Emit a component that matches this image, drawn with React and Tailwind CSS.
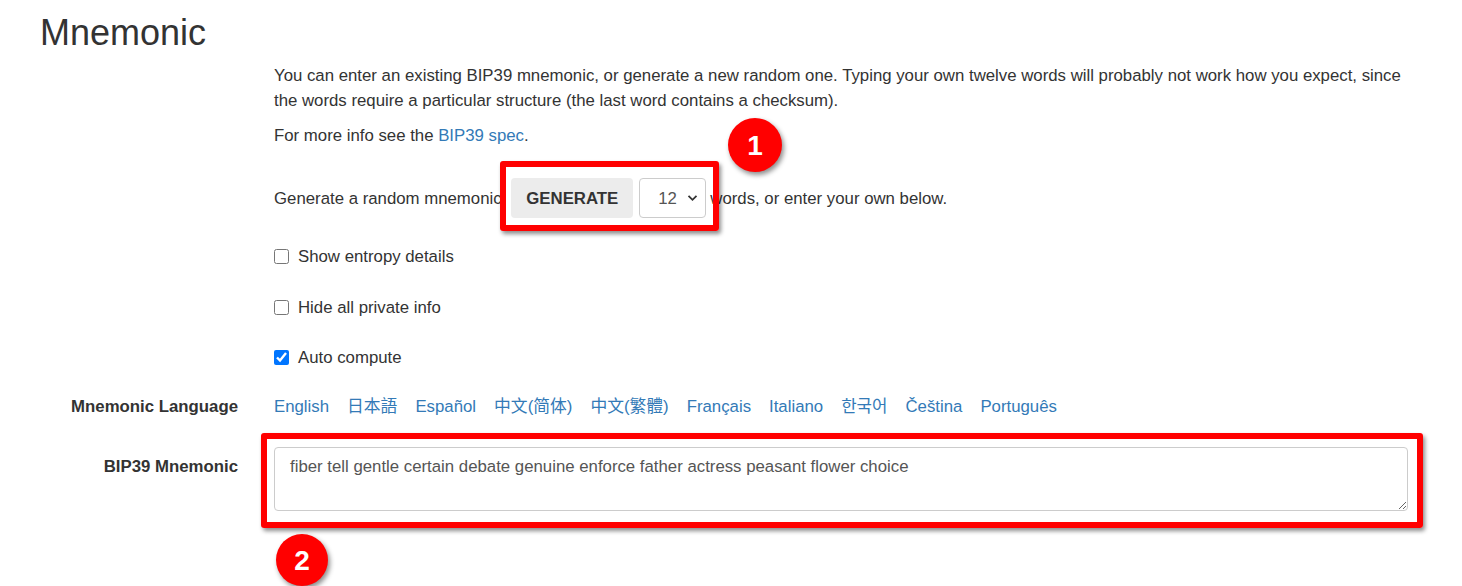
import React from "react";

const langs = [
  "English",
  "日本語",
  "Español",
  "中文(简体)",
  "中文(繁體)",
  "Français",
  "Italiano",
  "한국어",
  "Čeština",
  "Português",
];

function Check({ label, checked }) {
  return (
    <label className="flex items-center h-[25px]">
      <input
        type="checkbox"
        defaultChecked={checked}
        className="w-[15px] h-[15px] m-0 mr-[9px] accent-[#0075ff]"
      />
      <span>{label}</span>
    </label>
  );
}

export default function App() {
  return (
    <div
      className="relative w-full h-[586px] overflow-hidden bg-white text-[#333] text-[16.8px] leading-[25px]"
      style={{ fontFamily: '"Liberation Sans", Arial, "Noto Sans CJK SC", "Noto Sans CJK KR", sans-serif' }}
    >
      <div className="pl-[40px]">
        <h2 className="text-[36px] leading-[40px] font-normal mt-[13px] m-0">Mnemonic</h2>

        <div className="flex">
          <div className="w-[198px] shrink-0" />
          <div className="ml-[36px] w-[1134px] flex flex-col">
            <p className="m-0 mt-[9.5px]">
              You can enter an existing BIP39 mnemonic, or generate a new random one. Typing your own twelve words will probably not work how you expect, since the words require a particular structure (the last word contains a checksum).
            </p>
            <p className="m-0 mt-[10px]">
              For more info see the <a className="text-[#337ab7]" href="#">BIP39 spec</a>.
            </p>

            <div className="flex items-center mt-[30.5px] h-[40px]">
              <span>Generate a random mnemonic:</span>
              <div className="relative flex items-center ml-[5px]">
                <button className="h-[40px] w-[122px] bg-[#ececec] rounded-[4px] font-bold text-[#333] text-[16.8px]">
                  GENERATE
                </button>
                <div className="relative ml-[6px] h-[40px] w-[67px] border border-[#ccc] rounded-[4px] bg-white flex items-center">
                  <span className="pl-[18px] text-[#555]">12</span>
                  <svg className="absolute right-[7px] top-[15px]" width="11" height="8" viewBox="0 0 11 8">
                    <path d="M1.5 1.8 L5.5 5.8 L9.5 1.8" fill="none" stroke="#333" strokeWidth="1.8" />
                  </svg>
                </div>
                <div className="absolute left-[-11px] top-[-17px] right-[-13px] bottom-[-13px] border-[6px] border-[#ff0000] rounded-[3px] shadow-[2px_3px_4px_rgba(0,0,0,0.45)] pointer-events-none" />
              </div>
              <span className="ml-[4px]">words, or enter your own below.</span>
            </div>

            <div className="mt-[25.5px]">
              <Check label="Show entropy details" />
            </div>
            <div className="mt-[26px]">
              <Check label="Hide all private info" />
            </div>
            <div className="mt-[25px]">
              <Check label="Auto compute" checked />
            </div>
          </div>
        </div>

        <div className="flex mt-[24px] h-[25px] items-center">
          <div className="w-[198px] shrink-0 text-right font-bold">Mnemonic Language</div>
          <div className="ml-[36px] flex items-center gap-[18px] text-[#337ab7]">
            {langs.map((l) => (
              <a key={l} href="#" className="text-[#337ab7]">
                {l}
              </a>
            ))}
          </div>
        </div>

        <div className="flex mt-[28.5px]">
          <div className="w-[198px] shrink-0 text-right font-bold pt-[6.5px]">BIP39 Mnemonic</div>
          <div className="ml-[36px] w-[1134px] relative">
            <textarea
              className="block w-full h-[64px] border border-[#ccc] rounded-[4px] px-[15px] py-[6px] text-[#555] text-[16.8px] leading-[25px] outline-none"
              style={{ fontFamily: '"Liberation Sans", Arial, sans-serif' }}
              defaultValue="fiber tell gentle certain debate genuine enforce father actress peasant flower choice"
            />
            <div className="absolute left-[-13px] top-[-14px] right-[-15px] bottom-[-17px] border-[6px] border-[#ff0000] rounded-[3px] shadow-[2px_3px_4px_rgba(0,0,0,0.45)] pointer-events-none" />
          </div>
        </div>
      </div>

      <div className="absolute left-[728px] top-[118px] w-[54px] h-[54px] rounded-full bg-[#ff0000] shadow-[2px_3px_5px_rgba(0,0,0,0.45)] flex items-center justify-center text-white font-bold text-[28px]">
        1
      </div>
      <div className="absolute left-[276px] top-[534px] w-[52px] h-[52px] rounded-full bg-[#ff0000] shadow-[2px_3px_5px_rgba(0,0,0,0.45)] flex items-center justify-center text-white font-bold text-[28px]">
        2
      </div>
    </div>
  );
}
